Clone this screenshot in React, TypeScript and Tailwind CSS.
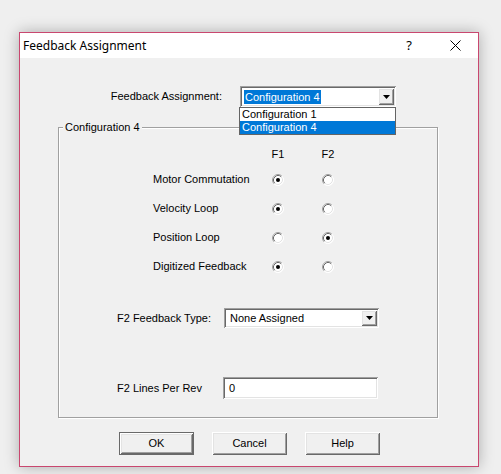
import React from "react";

const raised =
  "shadow-[inset_1px_1px_0_#ffffff,inset_-1px_-1px_0_#696969,inset_2px_2px_0_#e3e3e3,inset_-2px_-2px_0_#a0a0a0]";
const sunken =
  "shadow-[inset_1px_1px_0_#a0a0a0,inset_-1px_-1px_0_#ffffff,inset_2px_2px_0_#696969,inset_-2px_-2px_0_#e3e3e3]";

function Radio({ checked }: { checked?: boolean }) {
  return (
    <svg width="12" height="12" viewBox="0 0 12 12" className="block">
      <circle cx="6" cy="6" r="5.5" fill="#ffffff" />
      <path d="M2.11 9.89 A5.5 5.5 0 0 1 9.89 2.11" stroke="#a0a0a0" strokeWidth="1" fill="none" />
      <path d="M9.89 2.11 A5.5 5.5 0 0 1 2.11 9.89" stroke="#ffffff" strokeWidth="1" fill="none" />
      <path d="M2.82 9.18 A4.5 4.5 0 0 1 9.18 2.82" stroke="#696969" strokeWidth="1" fill="none" />
      <path d="M9.18 2.82 A4.5 4.5 0 0 1 2.82 9.18" stroke="#e3e3e3" strokeWidth="1" fill="none" />
      {checked && <circle cx="6" cy="6" r="2" fill="#000000" />}
    </svg>
  );
}

function DropButton() {
  return (
    <div className={`w-[16px] h-full flex items-center justify-center bg-[#f0f0f0] ${raised}`}>
      <svg width="7" height="4" viewBox="0 0 7 4" className="block">
        <path d="M0 0 H7 L3.5 4 Z" fill="#000000" />
      </svg>
    </div>
  );
}

function RadioRow({ label, f1 }: { label: string; f1: boolean }) {
  return (
    <div className="flex items-center h-[29px]">
      <div className="w-[113px]">{label}</div>
      <div className="w-[24px] flex justify-center">
        <Radio checked={f1} />
      </div>
      <div className="w-[24px] ml-[26px] flex justify-center">
        <Radio checked={!f1} />
      </div>
    </div>
  );
}

function Button({ label, def }: { label: string; def?: boolean }) {
  return (
    <div
      className={`w-[75px] h-[23px] flex items-center justify-center bg-[#f0f0f0] ${
        def ? "border border-[#696969]" : ""
      }`}
    >
      <div className={`w-full h-full flex items-center justify-center ${raised}`}>{label}</div>
    </div>
  );
}

export default function App() {
  return (
    <div className="w-[501px] h-[474px] bg-[#efefef] overflow-hidden pt-[32px] pl-[19px] font-['Liberation_Sans',Arial,sans-serif] text-[11px] leading-[13px] text-black whitespace-nowrap">
      <div className="w-[460px] h-[435px] border border-[#c9476f] bg-[#f0f0f0] shadow-[0_0_14px_rgba(0,0,0,0.28)] flex flex-col">
        {/* Title bar */}
        <div className="h-[25px] bg-white flex items-center">
          <div className="flex-1 pl-[3px] font-['Noto_Sans',sans-serif] text-[12px] leading-[16px]">
            Feedback Assignment
          </div>
          <div className="w-[46px] h-full flex items-center justify-center font-['Noto_Sans',sans-serif] text-[13px]">
            ?
          </div>
          <div className="w-[46px] h-full flex items-center justify-center">
            <svg width="11" height="11" viewBox="0 0 11 11" className="block">
              <path d="M0.5 0.5 L10.5 10.5 M10.5 0.5 L0.5 10.5" stroke="#000000" strokeWidth="1" />
            </svg>
          </div>
        </div>

        {/* Content */}
        <div className="flex flex-col">
          <div className="mt-[28px] flex items-center h-[21px] pl-[94px]">
            <div className="w-[108px] flex justify-end">Feedback Assignment:</div>
            <div className={`relative ml-[18px] w-[156px] h-[21px] bg-white ${sunken} flex items-center p-[2px]`}>
              <div className="flex-1 pl-[2px] h-full flex items-center">
                <span className="bg-[#0078d7] text-white h-[14px] leading-[14px] px-[1px]">Configuration 4</span>
              </div>
              <DropButton />
              <div className="absolute left-[-1px] top-full w-[157px] bg-white border border-[#646464] z-10">
                <div className="h-[13px] leading-[13px] pl-[2px]">Configuration 1</div>
                <div className="h-[13px] leading-[13px] pl-[2px] bg-[#0078d7] text-white">Configuration 4</div>
              </div>
            </div>
          </div>

          {/* Group box */}
          <div className="relative mt-[20px] ml-[38px] w-[380px] h-[291px] border border-[#a0a0a0] shadow-[1px_1px_0_#ffffff,inset_1px_1px_0_#ffffff] flex flex-col">
            <span className="absolute left-[4px] top-[-7px] px-[2px] bg-[#f0f0f0]">Configuration 4</span>

            <div className="pl-[94px] mt-[20px] flex h-[13px]">
              <div className="w-[113px]" />
              <div className="w-[24px] text-center">F1</div>
              <div className="w-[24px] ml-[26px] text-center">F2</div>
            </div>
            <div className="pl-[94px] mt-[4px] flex flex-col">
              <RadioRow label="Motor Commutation" f1={true} />
              <RadioRow label="Velocity Loop" f1={true} />
              <RadioRow label="Position Loop" f1={false} />
              <RadioRow label="Digitized Feedback" f1={true} />
            </div>

            <div className="pl-[58px] mt-[27px] flex items-center">
              <div className="w-[107px]">F2 Feedback Type:</div>
              <div className={`w-[155px] h-[20px] bg-white ${sunken} flex items-center p-[2px]`}>
                <div className="flex-1 pl-[4px]">None Assigned</div>
                <DropButton />
              </div>
            </div>

            <div className="pl-[58px] mt-[49px] flex items-center">
              <div className="w-[106px]">F2 Lines Per Rev</div>
              <div className={`w-[155px] h-[22px] bg-white ${sunken} flex items-center pl-[6px]`}>0</div>
            </div>
          </div>

          {/* Buttons */}
          <div className="mt-[14px] pl-[99px] flex gap-[18px]">
            <Button label="OK" def />
            <Button label="Cancel" />
            <Button label="Help" />
          </div>
        </div>
      </div>
    </div>
  );
}
